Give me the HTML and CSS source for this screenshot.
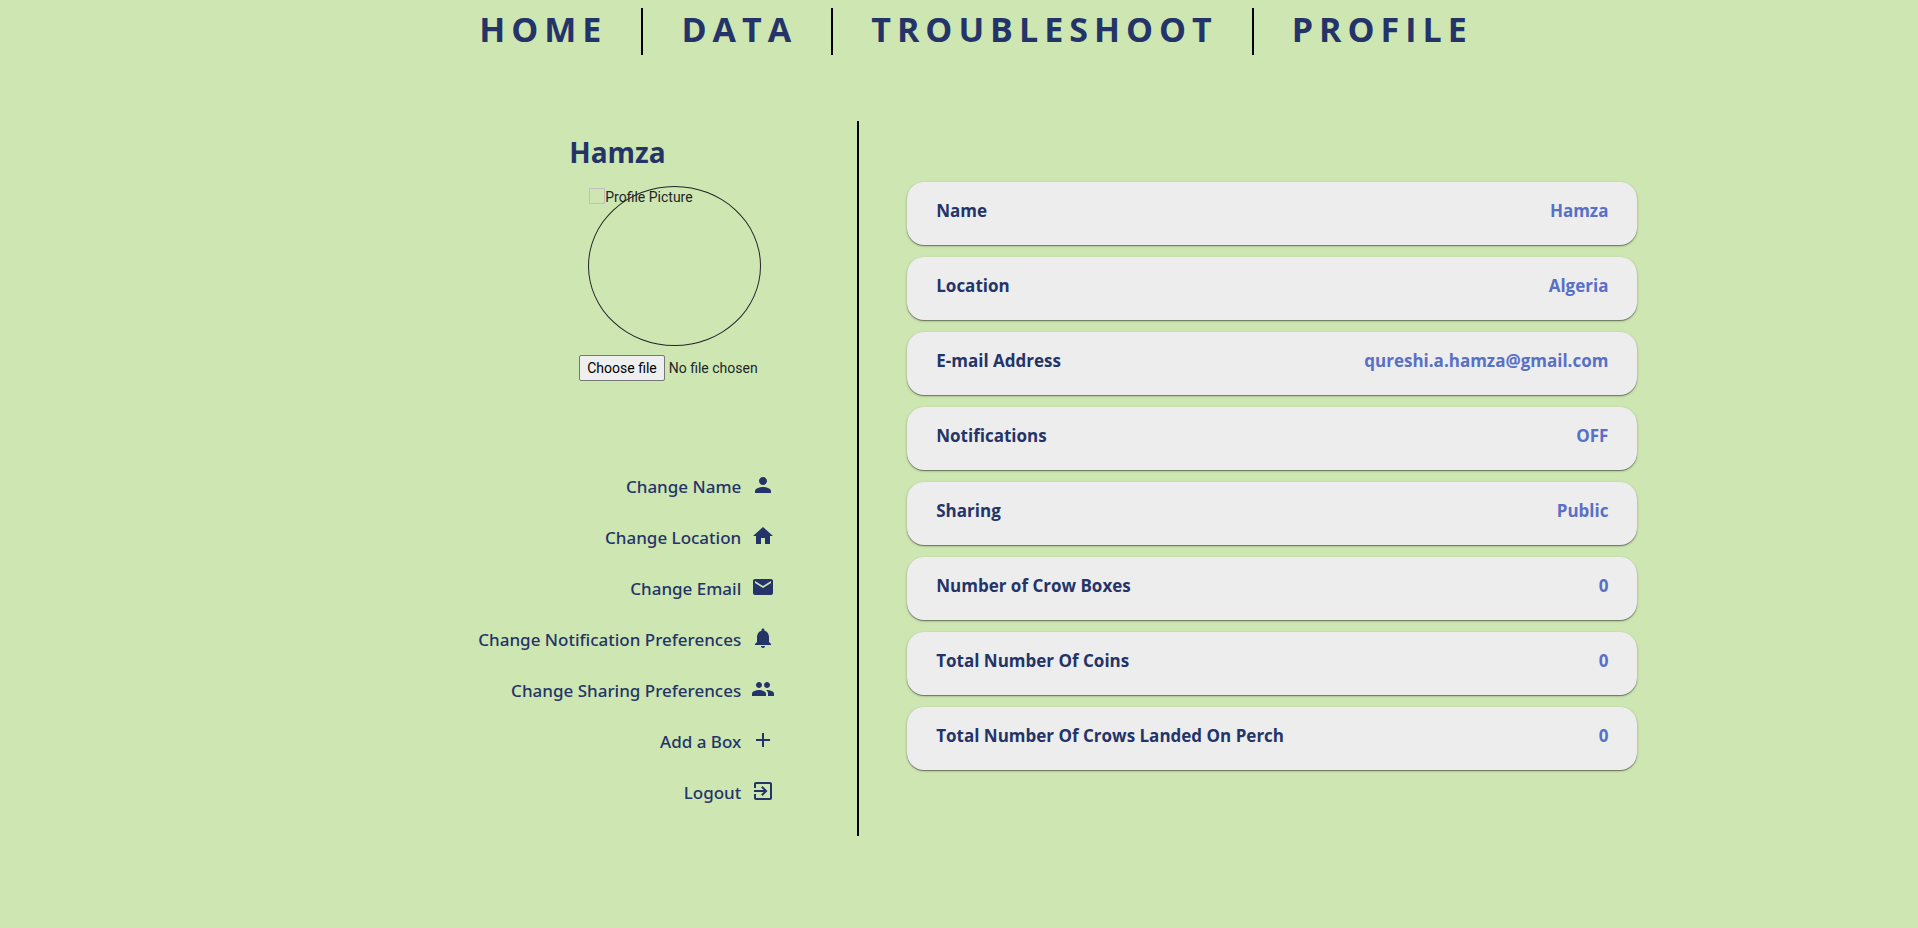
FILE: index.html
```html
<!DOCTYPE html>
<html lang="en-GB">
<head>
<meta charset="utf-8">
<meta name="viewport" content="width=device-width, initial-scale=1">
<title>Profile</title>
<link rel="stylesheet" href="styles.css">
</head>
<body>
<nav class="nav" aria-label="Main">
  <a class="nav-link" href="#home">HOME</a>
  <a class="nav-link" href="#data">DATA</a>
  <a class="nav-link" href="#troubleshoot">TROUBLESHOOT</a>
  <a class="nav-link" href="#profile">PROFILE</a>
</nav>
<main class="layout">
  <section class="side">
    <div class="profile">
      <h1 class="profile-name">Hamza</h1>
      <div class="avatar"><span class="avatar-mark"></span><span>Profile Picture</span></div>
      <label class="file">
        <input class="file-input" type="file">
        <span class="file-button">Choose file</span>
        <span>No file chosen</span>
      </label>
    </div>
    <div class="menu">
      <button class="menu-item" type="button">Change Name
        <svg class="icon" viewBox="0 0 24 24"><path d="M12 12c2.21 0 4-1.79 4-4s-1.79-4-4-4-4 1.79-4 4 1.79 4 4 4zm0 2c-2.67 0-8 1.34-8 4v2h16v-2c0-2.66-5.33-4-8-4z"/></svg></button>
      <button class="menu-item" type="button">Change Location
        <svg class="icon" viewBox="0 0 24 24"><path d="M10 20v-6h4v6h5v-8h3L12 3 2 12h3v8z"/></svg></button>
      <button class="menu-item" type="button">Change Email
        <svg class="icon" viewBox="0 0 24 24"><path d="M20 4H4c-1.1 0-1.99.9-1.99 2L2 18c0 1.1.9 2 2 2h16c1.1 0 2-.9 2-2V6c0-1.1-.9-2-2-2zm0 4l-8 5-8-5V6l8 5 8-5v2z"/></svg></button>
      <button class="menu-item" type="button">Change Notification Preferences
        <svg class="icon" viewBox="0 0 24 24"><path d="M12 22c1.1 0 2-.9 2-2h-4c0 1.1.89 2 2 2zm6-6v-5c0-3.07-1.64-5.64-4.5-6.32V4c0-.83-.67-1.5-1.5-1.5s-1.5.67-1.5 1.5v.68C7.63 5.36 6 7.92 6 11v5l-2 2v1h16v-1l-2-2z"/></svg></button>
      <button class="menu-item" type="button">Change Sharing Preferences
        <svg class="icon" viewBox="0 0 24 24"><path d="M16 11c1.66 0 2.99-1.34 2.99-3S17.66 5 16 5c-1.66 0-3 1.34-3 3s1.34 3 3 3zm-8 0c1.66 0 2.99-1.34 2.99-3S9.66 5 8 5C6.34 5 5 6.34 5 8s1.34 3 3 3zm0 2c-2.33 0-7 1.17-7 3.5V19h14v-2.5c0-2.33-4.67-3.5-7-3.5zm8 0c-.29 0-.62.02-.97.05 1.16.84 1.97 1.97 1.97 3.45V19h6v-2.5c0-2.33-4.67-3.5-7-3.5z"/></svg></button>
      <button class="menu-item" type="button">Add a Box
        <svg class="icon" viewBox="0 0 24 24"><path d="M19 13h-6v6h-2v-6H5v-2h6V5h2v6h6v2z"/></svg></button>
      <button class="menu-item" type="button">Logout
        <svg class="icon" viewBox="0 0 24 24"><path d="M10.09 15.59L11.5 17l5-5-5-5-1.41 1.41L12.67 11H3v2h9.67l-2.58 2.59zM19 3H5c-1.11 0-2 .9-2 2v4h2V5h14v14H5v-4H3v4c0 1.1.89 2 2 2h14c1.1 0 2-.9 2-2V5c0-1.1-.9-2-2-2z"/></svg></button>
    </div>
  </section>
  <dl class="cards">
    <div class="card"><dt>Name</dt><dd class="value">Hamza</dd></div>
    <div class="card"><dt>Location</dt><dd class="value">Algeria</dd></div>
    <div class="card"><dt>E-mail Address</dt><dd class="value">qureshi.a.hamza@gmail.com</dd></div>
    <div class="card"><dt>Notifications</dt><dd class="value">OFF</dd></div>
    <div class="card"><dt>Sharing</dt><dd class="value">Public</dd></div>
    <div class="card"><dt>Number of Crow Boxes</dt><dd class="value">0</dd></div>
    <div class="card"><dt>Total Number Of Coins</dt><dd class="value">0</dd></div>
    <div class="card"><dt>Total Number Of Crows Landed On Perch</dt><dd class="value">0</dd></div>
  </dl>
</main>
</body>
</html>
```
FILE: styles.css
```css
* { box-sizing: border-box; }

body {
  margin: 0;
  min-height: 100vh;
  background: #cee6b2;
  color: #243468;
  font-family: "Segoe UI", "Open Sans", "Noto Sans", sans-serif;
}

.nav {
  display: flex;
  justify-content: center;
  padding: 8px 0 0 30px;
}

.nav-link {
  padding: 0 34px 4px 38px;
  color: inherit;
  font-size: 34px;
  font-weight: 700;
  line-height: 43px;
  letter-spacing: 6px;
  text-decoration: none;
}

.nav-link + .nav-link { border-left: 2px solid #000; }

.layout {
  display: grid;
  grid-template-columns: 44.8% 1fr;
  margin-top: 66px;
}

.side {
  display: flex;
  flex-direction: column;
  align-items: flex-end;
  padding: 10px 82px 27px 0;
  border-right: 2px solid #000;
}

.profile {
  width: 206px;
  color: #212529;
  font-family: Roboto, sans-serif;
  font-size: 14px;
  line-height: 18px;
}

.profile-name {
  margin: 0;
  color: #243468;
  font-family: "Segoe UI", "Open Sans", "Noto Sans", sans-serif;
  font-size: 28px;
  font-weight: 700;
  line-height: 42px;
}

.avatar {
  display: flex;
  width: 173px;
  height: 160px;
  margin: 13px 0 9px 19px;
  padding-top: 1px;
  border: 1px solid #212529;
  border-radius: 50%;
  white-space: nowrap;
}

.avatar-mark {
  width: 16px;
  height: 16px;
  border: 1px solid #c0c0c0;
}

.file {
  display: flex;
  align-items: center;
  gap: 4px;
  margin-left: 10px;
  white-space: nowrap;
}

.file-input {
  position: absolute;
  width: 1px;
  height: 1px;
  opacity: 0;
}

.file-button {
  padding: 3px 7px;
  border: 1px solid #767676;
  border-radius: 2px;
  background: #efefef;
  color: #000;
}

.menu {
  display: flex;
  flex-direction: column;
  align-items: flex-end;
  gap: 19px;
  margin-top: 90px;
}

.menu-item {
  display: flex;
  align-items: center;
  gap: 10px;
  padding: 2px 0;
  border: 0;
  background: none;
  color: inherit;
  font-family: "Segoe UI", "Noto Sans", sans-serif;
  font-size: 17px;
  font-weight: 500;
  line-height: 28px;
}

.icon {
  width: 24px;
  height: 24px;
  margin-bottom: 4px;
  fill: currentColor;
}

.cards {
  display: flex;
  flex-direction: column;
  gap: 12px;
  margin: 0;
  padding: 61px 26.5% 0 48px;
}

.card {
  display: flex;
  justify-content: space-between;
  padding: 16px 29px 21px;
  border-radius: 17px;
  background: #ededed;
  box-shadow: 0 1px 1px rgba(0, 0, 0, 0.4), 0 1px 3px rgba(0, 0, 0, 0.2);
  font-size: 17px;
  font-weight: 700;
  line-height: 26px;
}

.value {
  margin: 0;
  color: #5870c6;
}
```
